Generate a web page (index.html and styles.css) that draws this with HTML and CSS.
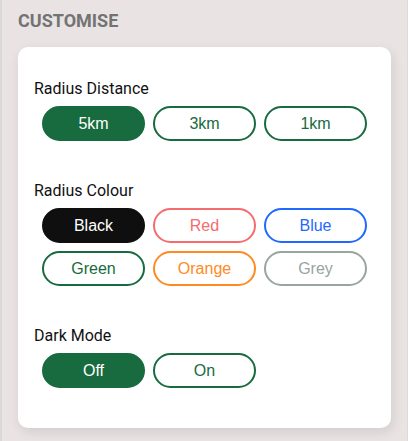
FILE: index.html
```html
<!DOCTYPE html>
<html lang="en">
<head>
<meta charset="utf-8">
<meta name="viewport" content="width=device-width, initial-scale=1">
<title>Customise</title>
<link rel="stylesheet" href="styles.css">
</head>
<body>
<main class="panel">
  <h2 class="title">CUSTOMISE</h2>
  <div class="card">
    <section class="group" role="group" aria-labelledby="distance">
      <h3 class="label" id="distance">Radius Distance</h3>
      <div class="options">
        <button type="button" class="pill green selected" aria-pressed="true">5km</button>
        <button type="button" class="pill green">3km</button>
        <button type="button" class="pill green">1km</button>
      </div>
    </section>
    <section class="group" role="group" aria-labelledby="colour">
      <h3 class="label" id="colour">Radius Colour</h3>
      <div class="options">
        <button type="button" class="pill black selected" aria-pressed="true">Black</button>
        <button type="button" class="pill red">Red</button>
        <button type="button" class="pill blue">Blue</button>
        <button type="button" class="pill green">Green</button>
        <button type="button" class="pill orange">Orange</button>
        <button type="button" class="pill grey">Grey</button>
      </div>
    </section>
    <section class="group" role="group" aria-labelledby="mode">
      <h3 class="label" id="mode">Dark Mode</h3>
      <div class="options">
        <button type="button" class="pill green selected" aria-pressed="true">Off</button>
        <button type="button" class="pill green">On</button>
      </div>
    </section>
  </div>
</main>
</body>
</html>
```
FILE: styles.css
```css
* {
  box-sizing: border-box;
}

body {
  margin: 0;
  background: #e9e3e3;
  font-family: Roboto, sans-serif;
  font-size: 16px;
  color: #111;
}

.panel {
  min-height: 100vh;
  padding: 10px 16px 12px;
  border-left: 2px solid #d9d9d9;
  border-right: 1px solid #dcdadb;
}

.title {
  margin: 0 0 15px;
  font-size: 18px;
  line-height: 22px;
  font-weight: 700;
  color: #737373;
}

.card {
  display: flex;
  flex-direction: column;
  gap: 40px;
  padding: 32px 16px 40px;
  border-radius: 10px;
  background: #fff;
  box-shadow: 2px 4px 12px rgba(0, 0, 0, 0.1);
}

.label {
  margin: 0 0 8px;
  font-size: 16px;
  line-height: 19px;
  font-weight: 400;
}

.options {
  display: grid;
  grid-template-columns: repeat(3, 1fr);
  gap: 8px;
  padding: 0 8px;
}

.pill {
  padding: 6px 8px;
  border: 2px solid currentColor;
  border-radius: 18px;
  background: #fff;
  font-family: "Liberation Sans", Arial, sans-serif;
  font-size: 16px;
  line-height: 19px;
  cursor: pointer;
}

.green {
  color: #176b3e;
}

.black {
  color: #0f0f0f;
}

.red {
  color: #f56c6f;
}

.blue {
  color: #1f69ff;
}

.orange {
  color: #ff8a24;
}

.grey {
  color: #98a5a0;
}

.selected {
  color: #fff;
}

.green.selected {
  border-color: #176b3e;
  background: #176b3e;
}

.black.selected {
  border-color: #0f0f0f;
  background: #0f0f0f;
}
```
